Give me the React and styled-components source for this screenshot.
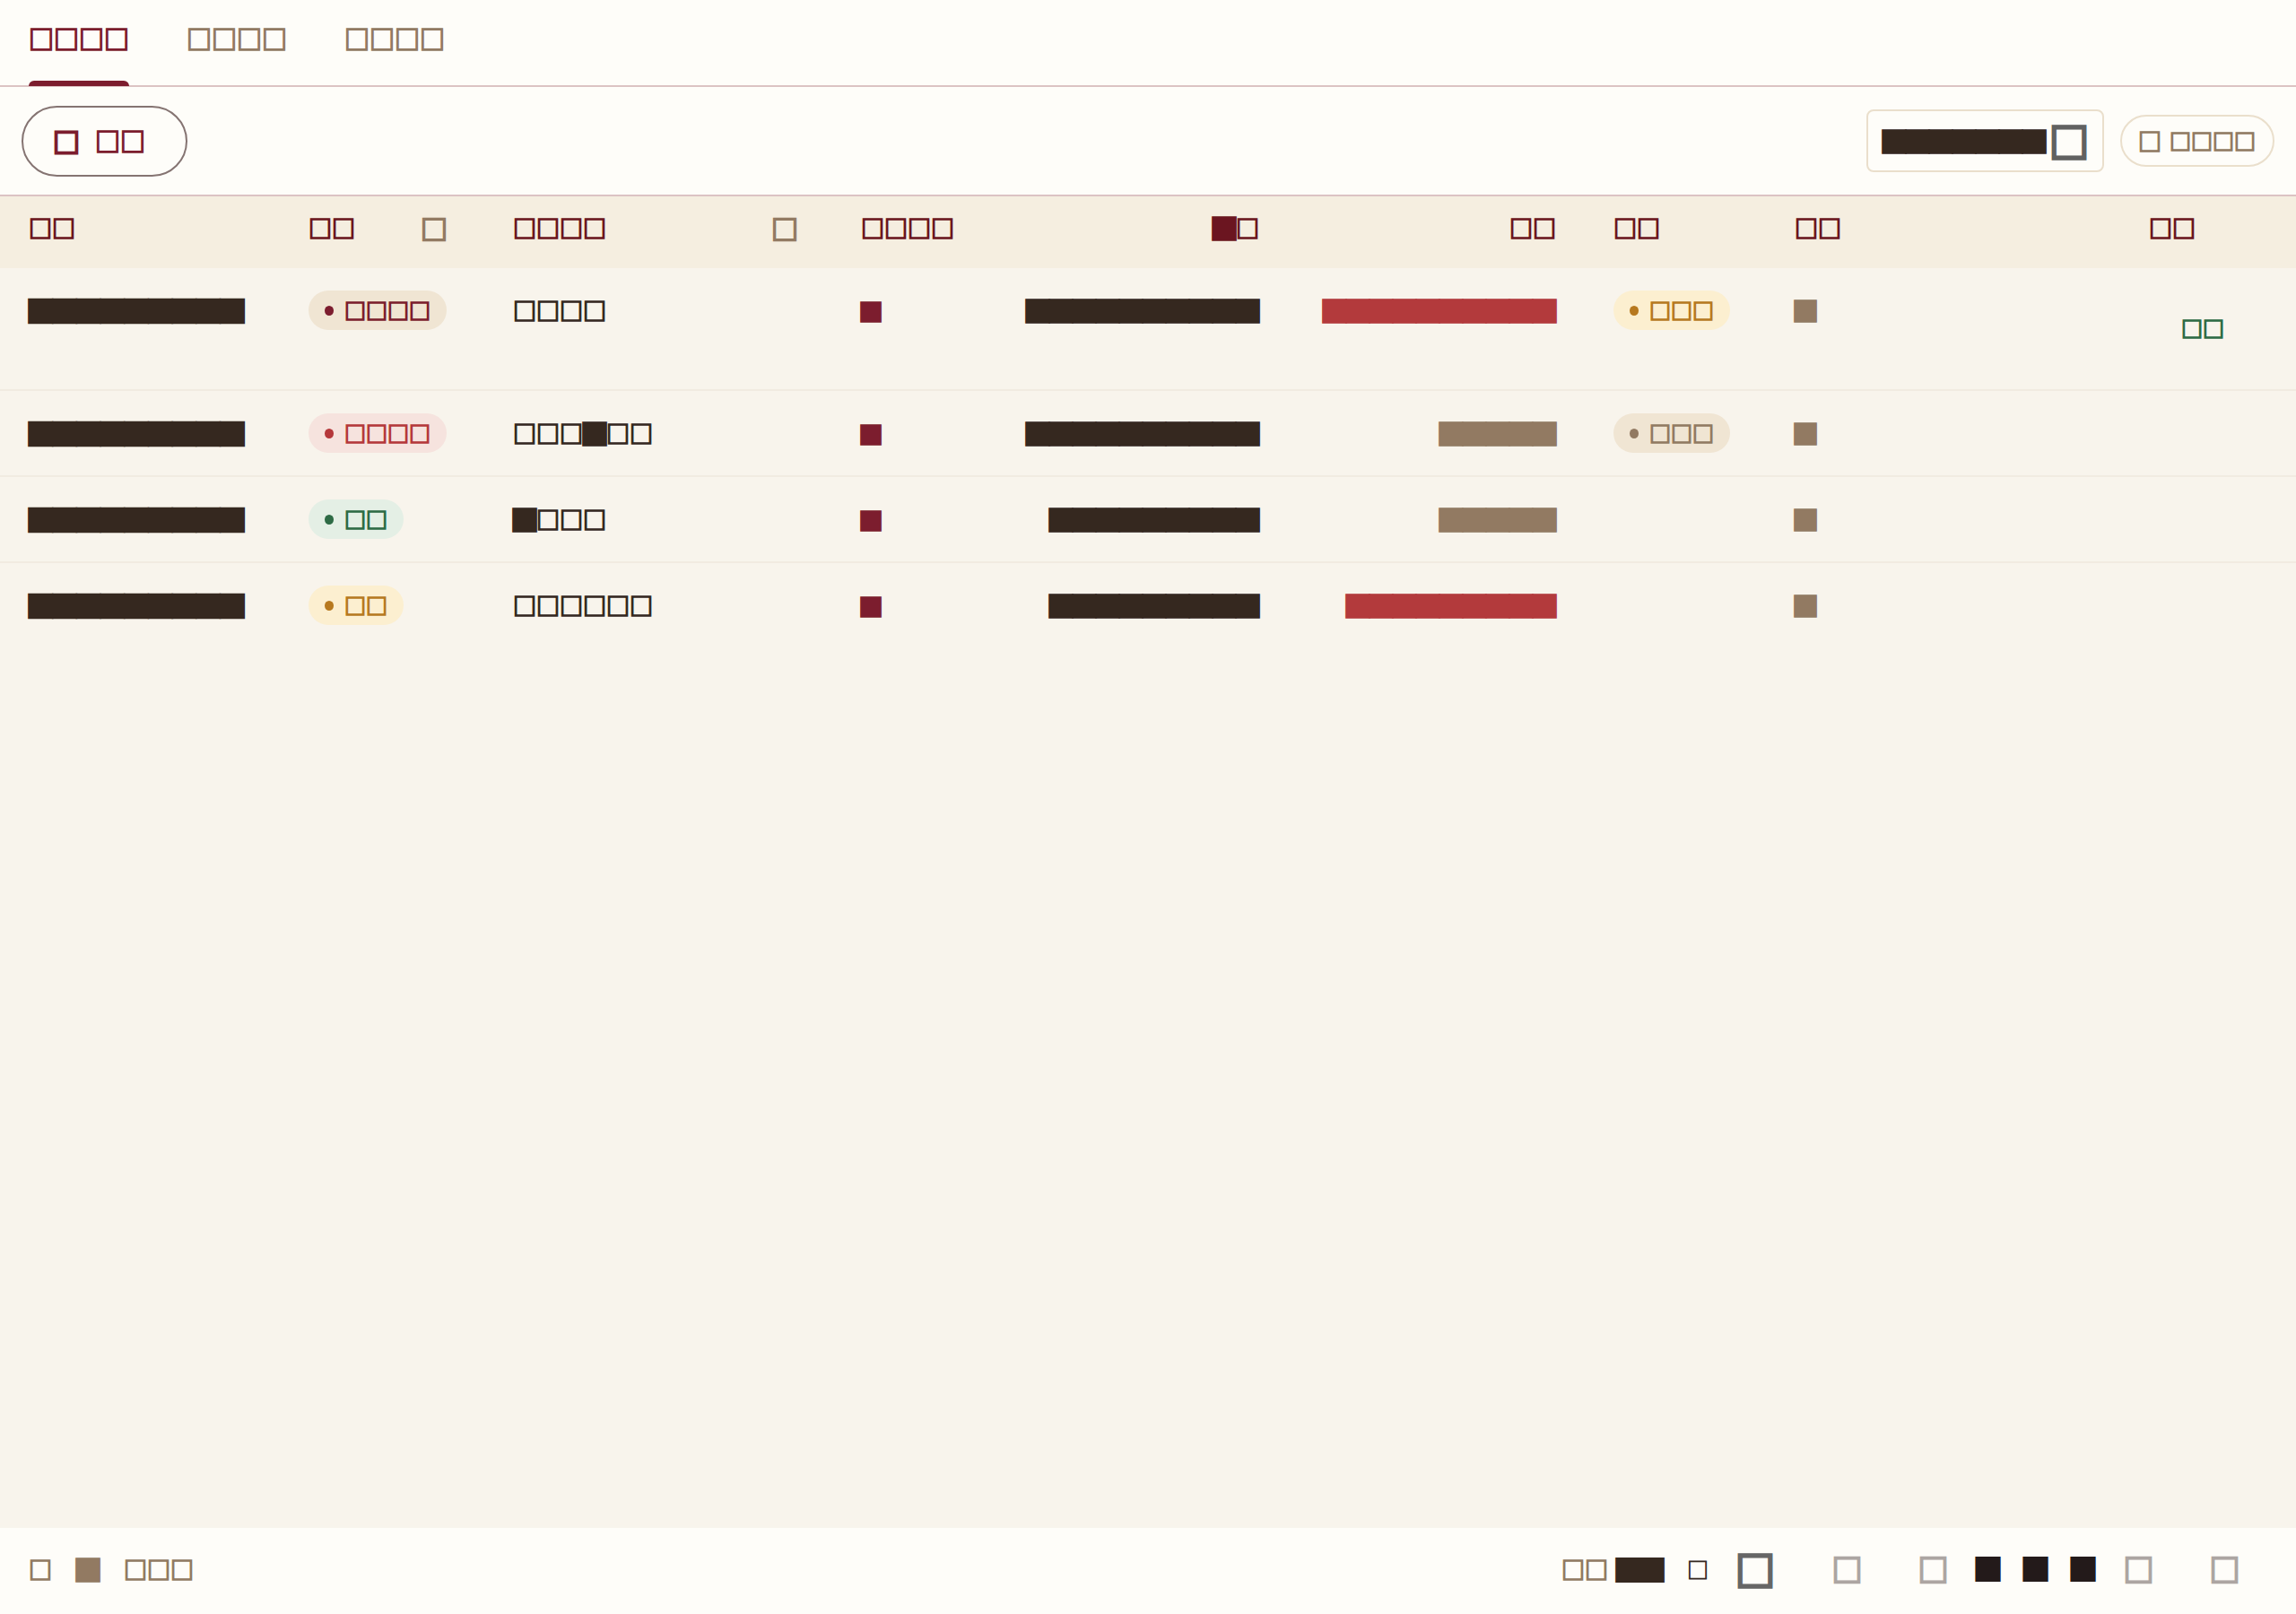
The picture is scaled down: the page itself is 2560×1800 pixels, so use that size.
import React from 'react';
import styled, { createGlobalStyle, css } from 'styled-components';

const box = (n) => '□'.repeat(n);
const blk = (n) => '█'.repeat(n);

const GlobalStyle = createGlobalStyle`
  html, body { margin: 0; padding: 0; }
  body {
    background: #f8f4ec;
    color: #35281f;
    font-family: "Noto Sans CJK SC", "Noto Sans", sans-serif;
    -webkit-text-stroke: 1.7px currentColor;
  }
  * { box-sizing: border-box; }
`;

const Page = styled.div`
  display: flex;
  flex-direction: column;
  min-height: 1800px;
`;

/* ---------- tabs ---------- */
const TabBar = styled.nav`
  display: flex;
  gap: 64px;
  height: 97px;
  padding: 0 32px;
  background: #fefdf9;
  border-bottom: 2px solid #dcc3c3;
`;

const Tab = styled.div`
  position: relative;
  padding-top: 29px;
  font-size: 28px;
  line-height: 28px;
  color: ${(p) => (p.$active ? '#7c1d2e' : '#927a62')};
  ${(p) =>
    p.$active &&
    css`
      &::after {
        content: '';
        position: absolute;
        left: 0;
        right: 0;
        bottom: -1px;
        height: 6px;
        border-radius: 6px 6px 0 0;
        background: #7c1d2e;
      }
    `}
`;

/* ---------- toolbar ---------- */
const Toolbar = styled.div`
  display: flex;
  align-items: center;
  justify-content: space-between;
  height: 122px;
  padding: 0 24px;
  background: #fefdf9;
  border-bottom: 2px solid #dcc3c3;
`;

const NewButton = styled.button`
  display: flex;
  align-items: center;
  gap: 17px;
  height: 79px;
  padding: 0 45px 0 33px;
  border: 2px solid #857472;
  border-radius: 40px;
  background: transparent;
  color: #7c1d2e;
  font-family: inherit;
  font-size: 28px;
  line-height: 28px;
`;

const ButtonIcon = styled.span`
  font-size: 30px;
  line-height: 30px;
  -webkit-text-stroke: 2.6px currentColor;
`;

const ToolGroup = styled.div`
  display: flex;
  align-items: center;
  gap: 18px;
`;

const SearchBox = styled.div`
  display: flex;
  align-items: center;
  gap: 4px;
  width: 265px;
  height: 70px;
  padding: 0 16px;
  border: 2px solid #eadfcc;
  border-radius: 8px;
  font-size: 26px;
  line-height: 26px;
  color: #35281f;
`;

const SearchIcon = styled.span`
  font-size: 44px;
  line-height: 44px;
  color: #616161;
  -webkit-text-stroke: 3.6px currentColor;
`;

const GhostPill = styled.button`
  display: flex;
  align-items: center;
  gap: 9px;
  height: 58px;
  padding: 0 19px 0 18px;
  border: 2px solid #eadfcc;
  border-radius: 30px;
  background: transparent;
  color: #927a62;
  font-family: inherit;
  font-size: 24px;
  line-height: 24px;
`;

const PillIcon = styled.span`
  font-size: 26px;
  line-height: 26px;
`;

/* ---------- table ---------- */
const COLS = '312px 228px 388px 172px 336px 331px 202px 395px 1fr';

const TableArea = styled.section`
  flex: 1;
  background: #f8f4ec;
`;

const HeadRow = styled.div`
  display: grid;
  grid-template-columns: ${COLS};
  height: 80px;
  background: #f5eee0;
`;

const HeadCell = styled.div`
  display: flex;
  align-items: flex-start;
  justify-content: ${(p) => (p.$align === 'right' ? 'flex-end' : 'space-between')};
  padding: 22px 32px 0;
  font-size: 26px;
  line-height: 26px;
  color: #6b1520;
`;

const SortIcon = styled.span`
  margin-top: -2px;
  margin-right: ${(p) => p.$inset ?? 9}px;
  font-size: 30px;
  line-height: 30px;
  color: #927a62;
  -webkit-text-stroke: 2.2px currentColor;
`;

const Row = styled.div`
  display: grid;
  grid-template-columns: ${COLS};
  border-bottom: ${(p) => (p.$last ? 'none' : '2px solid #f1ebe1')};
`;

const Cell = styled.div`
  display: flex;
  align-items: flex-start;
  justify-content: ${(p) => (p.$align === 'right' ? 'flex-end' : 'flex-start')};
  padding: 25px 32px;
  min-height: 94px;
`;

const CellText = styled.span`
  font-size: ${(p) => p.$size || 26}px;
  line-height: 44px;
  height: 44px;
  color: ${(p) => p.$color || '#35281f'};
  white-space: nowrap;
`;

const tones = {
  maroon: { bg: '#f0e5d3', fg: '#7c1d2e' },
  red: { bg: '#f6e3de', fg: '#b5383b' },
  green: { bg: '#e4efe5', fg: '#2e6b45' },
  amber: { bg: '#fcefd0', fg: '#b7791f' },
  sand: { bg: '#f0e5d3', fg: '#927a62' },
};

const Badge = styled.span`
  display: inline-flex;
  align-items: center;
  gap: 12px;
  height: 44px;
  padding: 0 18px;
  border-radius: 22px;
  background: ${(p) => tones[p.$tone].bg};
  color: ${(p) => tones[p.$tone].fg};
  font-size: 24px;
  line-height: 24px;
  white-space: nowrap;
  &::before {
    content: '';
    width: 10px;
    height: 11px;
    border-radius: 50%;
    background: currentColor;
  }
`;

const ActionLink = styled.a`
  display: block;
  padding: 30px 0 31px 36px;
  font-size: 24px;
  line-height: 24px;
  color: #2e6b45;
  cursor: pointer;
`;

/* ---------- footer ---------- */
const Footer = styled.footer`
  display: flex;
  align-items: center;
  justify-content: space-between;
  height: 96px;
  padding: 0 53px 5px 32px;
  background: #fefdf9;
`;

const Summary = styled.div`
  display: flex;
  align-items: center;
  gap: 27px;
  font-size: 26px;
  line-height: 26px;
  color: #927a62;
`;

const FooterRight = styled.div`
  display: flex;
  align-items: center;
`;

const SizeLabel = styled.span`
  font-size: 26px;
  line-height: 26px;
  color: #927a62;
`;

const SizeValue = styled.span`
  margin-left: 9px;
  font-size: 26.5px;
  line-height: 26px;
  color: #35281f;
`;

const SizeUnit = styled.span`
  margin-left: 26px;
  font-size: 24px;
  line-height: 24px;
  color: #35281f;
  -webkit-text-stroke: 0.8px currentColor;
`;

const SelectArrow = styled.span`
  margin-left: 30px;
  font-size: 44px;
  line-height: 44px;
  color: #666;
  -webkit-text-stroke: 3.6px currentColor;
`;

const Pager = styled.div`
  display: flex;
  align-items: center;
  margin-left: 54px;
`;

const PageButton = styled.button`
  display: flex;
  align-items: center;
  justify-content: center;
  width: 53px;
  height: 53px;
  padding: 0;
  margin-left: ${(p) => p.$gap || 0}px;
  border: none;
  background: transparent;
  font-family: inherit;
  font-size: ${(p) => (p.$nav ? 34 : 26.5)}px;
  line-height: 1;
  color: ${(p) => (p.$nav ? '#aca5a2' : '#231a1a')};
  ${(p) => p.$nav && css`-webkit-text-stroke: 2.4px currentColor;`}
`;

const tabs = [
  { label: box(4), active: true },
  { label: box(4) },
  { label: box(4) },
];

const rows = [
  {
    id: blk(9),
    status: { tone: 'maroon', text: box(4) },
    name: box(4),
    amount: blk(10),
    diff: { color: '#b33a3c', text: blk(10) },
    flag: { tone: 'amber', text: box(3) },
    action: box(2),
  },
  {
    id: blk(9),
    status: { tone: 'red', text: box(4) },
    name: '□□□█□□',
    amount: blk(10),
    diff: { color: '#927a62', text: blk(5) },
    flag: { tone: 'sand', text: box(3) },
  },
  {
    id: blk(9),
    status: { tone: 'green', text: box(2) },
    name: '█□□□',
    amount: blk(9),
    diff: { color: '#927a62', text: blk(5) },
  },
  {
    id: blk(9),
    status: { tone: 'amber', text: box(2) },
    name: box(6),
    amount: blk(9),
    diff: { color: '#b33a3c', text: blk(9) },
  },
];

export default function App() {
  return (
    <Page>
      <GlobalStyle />
      <TabBar>
        {tabs.map((t, i) => (
          <Tab key={i} $active={t.active}>
            {t.label}
          </Tab>
        ))}
      </TabBar>

      <Toolbar>
        <NewButton>
          <ButtonIcon>□</ButtonIcon>
          <span>{box(2)}</span>
        </NewButton>
        <ToolGroup>
          <SearchBox>
            <span>{blk(7)}</span>
            <SearchIcon>□</SearchIcon>
          </SearchBox>
          <GhostPill>
            <PillIcon>□</PillIcon>
            <span>{box(4)}</span>
          </GhostPill>
        </ToolGroup>
      </Toolbar>

      <TableArea>
        <HeadRow>
          <HeadCell>{box(2)}</HeadCell>
          <HeadCell>
            <span>{box(2)}</span>
            <SortIcon>□</SortIcon>
          </HeadCell>
          <HeadCell>
            <span>{box(4)}</span>
            <SortIcon $inset={6}>□</SortIcon>
          </HeadCell>
          <HeadCell>{box(4)}</HeadCell>
          <HeadCell $align="right">█□</HeadCell>
          <HeadCell $align="right">{box(2)}</HeadCell>
          <HeadCell>{box(2)}</HeadCell>
          <HeadCell>{box(2)}</HeadCell>
          <HeadCell>{box(2)}</HeadCell>
        </HeadRow>

        {rows.map((r, i) => (
          <Row key={i} $last={i === rows.length - 1}>
            <Cell>
              <CellText $size={26.7}>{r.id}</CellText>
            </Cell>
            <Cell>
              <Badge $tone={r.status.tone}>{r.status.text}</Badge>
            </Cell>
            <Cell>
              <CellText>{r.name}</CellText>
            </Cell>
            <Cell>
              <CellText $size={22} $color="#7c1d2e">█</CellText>
            </Cell>
            <Cell $align="right">
              <CellText>{r.amount}</CellText>
            </Cell>
            <Cell $align="right">
              <CellText $color={r.diff.color}>{r.diff.text}</CellText>
            </Cell>
            <Cell>{r.flag && <Badge $tone={r.flag.tone}>{r.flag.text}</Badge>}</Cell>
            <Cell>
              <CellText $size={24} $color="#927a62">█</CellText>
            </Cell>
            <Cell>{r.action && <ActionLink>{r.action}</ActionLink>}</Cell>
          </Row>
        ))}
      </TableArea>

      <Footer>
        <Summary>
          <span>□</span>
          <span>█</span>
          <span>{box(3)}</span>
        </Summary>
        <FooterRight>
          <SizeLabel>{box(2)}</SizeLabel>
          <SizeValue>{blk(2)}</SizeValue>
          <SizeUnit>□</SizeUnit>
          <SelectArrow>□</SelectArrow>
          <Pager>
            <PageButton $nav>□</PageButton>
            <PageButton $nav $gap={43}>□</PageButton>
            <PageButton $gap={8}>█</PageButton>
            <PageButton>█</PageButton>
            <PageButton>█</PageButton>
            <PageButton $nav $gap={9}>□</PageButton>
            <PageButton $nav $gap={43}>□</PageButton>
          </Pager>
        </FooterRight>
      </Footer>
    </Page>
  );
}
